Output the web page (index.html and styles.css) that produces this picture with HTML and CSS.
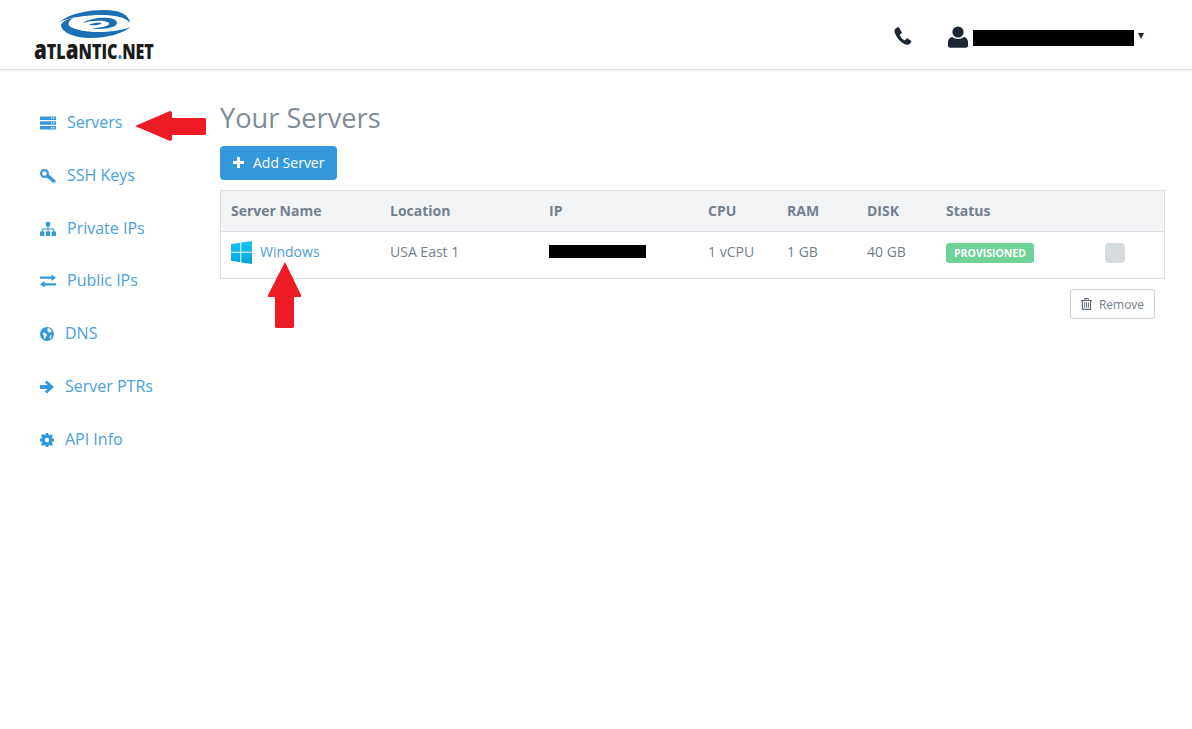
FILE: index.html
```html
<!DOCTYPE html>
<html lang="en">
<head>
<meta charset="utf-8">
<title>Your Servers</title>
<link rel="stylesheet" href="styles.css">
</head>
<body>
<header class="topbar">
  <a class="logo">
    <svg class="logo-mark" viewBox="0 0 72 28" width="72" height="28">
      <path fill="#1a6fb5" d="M0 12C12 3 30 0 45 0c15 0 25 4 26 13-4-6-16-8-29-8C28 5 12 7 0 12z"/>
      <path fill="#1a6fb5" d="M72 17c-10 7-24 11-40 11C15 28 2 22 2 15c1-3 6-6 12-7-6 4-6 8 0 10 14 6 41 5 58-1z"/>
      <path fill="#1a6fb5" d="M24 13c4-4 18-6 26-5 8 1 10 5 6 8-6 3-18 4-23 2 7 0 19-2 17-5-3-3-18-3-26 0z"/>
      <path fill="#1a6fb5" d="M30 14.500c4-1.500 9-2 13-1.500-3 2.500-9 3-13 1.500z"/>
    </svg>
    <span class="logo-text"><span class="logo-a">a</span>TL<span class="logo-a">a</span>NTIC<span class="logo-dot">.</span>NET</span>
  </a>
  <div class="top-actions">
    <svg class="phone" viewBox="0 0 20 20" width="20" height="20">
      <path fill="#1c2733" d="M4.700 1.200 2.400 2.700C1.200 3.600 1.300 5.500 2.100 7.500c1.800 4.600 5.800 9 9.900 10.800 2 .9 3.800.6 4.900-.5l1.300-1.700c.3-.5.200-1-.2-1.300l-3.300-2.300c-.5-.3-1-.2-1.300.2l-1 1.300c-.3.400-.7.400-1.100.2C9.800 13.700 7.900 11.400 7 9.400c-.2-.4-.1-.8.300-1.100l1.100-.8c.4-.3.500-.8.300-1.300L6 1.500c-.3-.5-.8-.6-1.300-.3z"/>
    </svg>
    <div class="account">
      <svg class="user" viewBox="0 0 20 22" width="20" height="22">
        <circle cx="10" cy="6" r="5.600" fill="#1c2733"/>
        <path fill="#1c2733" d="M0 19.500v-3.700C0 13.300 1.800 11.500 4.200 11c1.500 1.300 3.600 2 5.800 2s4.300-.7 5.800-2c2.400.5 4.200 2.300 4.200 4.800v3.700c0 1.300-1 2.300-2.300 2.300H2.300C1 21.800 0 20.800 0 19.500z"/>
      </svg>
      <span class="redact-name"></span>
      <span class="caret"></span>
    </div>
  </div>
</header>

<div class="layout">
  <nav class="sidebar">
    <a class="nav-item">
      <svg class="nav-icon wide" viewBox="0 0 16 13"><path fill="#3498db" fill-rule="evenodd" d="M0 0h16v3.400H0zM11 1v1.300h1.200V1zm2.200 0v1.300h1.200V1zM0 4.800h16v3.400H0zm11 1v1.300h1.200V5.800zm2.200 0v1.300h1.200V5.800zM0 9.600h16V13H0zm11 1v1.300h1.200v-1.300zm2.200 0v1.300h1.200v-1.300z"/></svg>
      <span>Servers</span>
    </a>
    <a class="nav-item">
      <svg class="nav-icon wide" viewBox="0 0 16 14"><path fill="#3498db" fill-rule="evenodd" d="M4.500 0C2 0 0 2 0 4.500S2 9 4.500 9c.8 0 1.500-.2 2.100-.5l1.600 1.500h1.300l.2 1.500h1.500l.2 1.500 1.600.6h2.500v-2.200L8.800 5.400c.1-.3.200-.6.200-.9C9 2 7 0 4.500 0zM4.500 2.200a2.300 2.300 0 1 1 0 4.600 2.300 2.300 0 0 1 0-4.600z"/></svg>
      <span>SSH Keys</span>
    </a>
    <a class="nav-item">
      <svg class="nav-icon wide" viewBox="0 0 16 14"><path fill="#3498db" d="M5.800 0h4.400v4.300H8.600v2.200h5.700V9.500H16V14h-4.300V9.500h1.500V7.600H8.600v1.900h1.500V14H5.900V9.500h1.600V7.600H2.800v1.900h1.500V14H0V9.500h1.700V6.500h5.700V4.300H5.800z"/></svg>
      <span>Private IPs</span>
    </a>
    <a class="nav-item">
      <svg class="nav-icon wide" viewBox="0 0 16 13"><path fill="#3498db" d="M11.500 0 16 3.200l-4.500 3.200V4.300H0V2.100h11.500zM4.500 6.600v2.100H16v2.200H4.500V13L0 9.800z"/></svg>
      <span>Public IPs</span>
    </a>
    <a class="nav-item tight">
      <svg class="nav-icon" viewBox="0 0 14 14"><circle cx="7" cy="7" r="7" fill="#3498db"/><path fill="#fff" d="M7.500 1.200 9.500 1.500l2 2-.5 2-1.500-.5-1.200.5-.8-1.500zM2.500 6l2-.5 2.500 2-.5 1.500-1 1-.3 2-1.200-.8-.5-3zM10 8.500l1.800-.3-.8 2.500-1.500 1z"/></svg>
      <span>DNS</span>
    </a>
    <a class="nav-item tight">
      <svg class="nav-icon" viewBox="0 0 14 14"><path fill="#3498db" d="M6.900.6 14 7l-7.100 6.400-2-2 2.700-2.400H0V5h7.600L4.900 2.600z"/></svg>
      <span>Server PTRs</span>
    </a>
    <a class="nav-item tight">
      <svg class="nav-icon" viewBox="0 0 14 14"><path fill="#3498db" fill-rule="evenodd" d="M5.800 0h2.400l.4 1.900 1 .4 1.600-1 1.700 1.700-1 1.600.4 1 1.700.4v2.400l-1.700.4-.4 1 1 1.600-1.700 1.700-1.600-1-1 .4-.4 1.500H5.800l-.4-1.500-1-.4-1.600 1-1.700-1.700 1-1.600-.4-1L0 8.200V5.800l1.700-.4.4-1-1-1.600 1.700-1.700 1.600 1 1-.4zM7 4.800a2.200 2.200 0 1 0 0 4.400 2.200 2.200 0 0 0 0-4.400z"/></svg>
      <span>API Info</span>
    </a>
  </nav>

  <main class="content">
    <h1 class="title">Your Servers</h1>
    <button class="add-btn"><span class="plus"></span>Add Server</button>
    <div class="table">
      <div class="row head">
        <div class="cell">Server Name</div>
        <div class="cell">Location</div>
        <div class="cell">IP</div>
        <div class="cell">CPU</div>
        <div class="cell">RAM</div>
        <div class="cell">DISK</div>
        <div class="cell">Status</div>
        <div class="cell"></div>
      </div>
      <div class="row body">
        <div class="cell name">
          <svg class="win" viewBox="0 0 21 23" width="21" height="23">
            <defs><linearGradient id="wing" x1="0" y1="0" x2="0" y2="1"><stop offset="0" stop-color="#18c3f5"/><stop offset="1" stop-color="#00a3dc"/></linearGradient></defs>
            <path fill="url(#wing)" d="M0 3.300 9.300 1.700v9.100H0zM10.300 1.500 21 0v10.800H10.300zM0 11.800h9.300v9.500L0 19.700zM10.300 11.800H21V23l-10.700-1.600z"/>
          </svg>
          <a class="link">Windows</a>
        </div>
        <div class="cell">USA East 1</div>
        <div class="cell"><span class="redact-ip"></span></div>
        <div class="cell">1 vCPU</div>
        <div class="cell">1 GB</div>
        <div class="cell">40 GB</div>
        <div class="cell"><span class="badge">PROVISIONED</span></div>
        <div class="cell"><span class="check"></span></div>
      </div>
    </div>
    <div class="table-actions">
      <button class="remove-btn">
        <svg viewBox="0 0 12 13" width="11" height="12"><path fill="#5f6b76" fill-rule="evenodd" d="M4 0h4l1 2h3v1.200h-1V13H1V3.200H0V2h3zM4.300 1.200 4 2h4l-.3-.8zM2.200 3.200v8.600h7.600V3.200zM3.500 4.500h1v6h-1zm2 0h1v6h-1zm2 0h1v6h-1z"/></svg>
        Remove
      </button>
    </div>
  </main>
</div>

<svg class="arrow arrow-left" viewBox="0 0 72 30" width="72" height="30"><path fill="#ed1c24" d="M0 15 35 0l2 1v6h33l1 1v15l-1 1H37v5l-2 1z"/></svg>
<svg class="arrow arrow-up" viewBox="0 0 34 66" width="34" height="66"><path fill="#ed1c24" d="M17 0 33 33v2H26v30l-1 1H8l-1-1V35H0v-2z"/></svg>
</body>
</html>
```

FILE: styles.css
```css
* { box-sizing: border-box; }
html, body { margin: 0; padding: 0; }
body {
  width: 1192px;
  height: 729px;
  overflow: hidden;
  position: relative;
  background: #fff;
  font-family: "Open Sans", sans-serif;
  font-size: 14px;
  color: #74808c;
}
.topbar {
  height: 70px;
  display: flex;
  justify-content: space-between;
  border-bottom: 1px solid #dcdcdc;
  box-shadow: 0 1px 2px rgba(0,0,0,.07);
  padding: 10px 48px 0 34px;
}
.logo {
  display: flex;
  flex-direction: column;
  width: 121px;
  align-items: flex-start;
}
.logo-mark { margin: 0 0 0 25px; display: block; }
.logo-text {
  font-family: "Open Sans", sans-serif;
  font-weight: 800;
  font-size: 21px;
  line-height: 20px;
  margin-top: 3px;
  color: #1b1b1b;
  white-space: nowrap;
  transform: scaleX(.765);
  transform-origin: left center;
}
.logo-a { font-size: 27px; line-height: 0; }
.logo-dot { color: #1a8ad2; }
.top-actions {
  display: flex;
  align-items: flex-start;
  padding-top: 16px;
}
.phone { margin-right: 35px; }
.account { display: flex; align-items: center; }
.user { margin-right: 5px; }
.redact-name {
  display: block;
  width: 161px;
  height: 16px;
  background: #000;
  margin-right: 4px;
  position: relative;
  top: 1px;
}
.caret {
  display: block;
  border-style: solid;
  border-width: 6px 3.500px 0;
  border-color: #1c2733 transparent transparent;
  position: relative;
  top: -1px;
}

.layout { display: flex; }
.sidebar {
  width: 220px;
  padding: 41.500px 0 0 40px;
  display: flex;
  flex-direction: column;
  gap: 31.800px;
}
.nav-item {
  display: flex;
  align-items: center;
  height: 21px;
  font-size: 16px;
  color: #4a9fdc;
  white-space: nowrap;
}
.nav-icon { width: 14px; height: 14px; margin-right: 11px; flex: none; position: relative; top: 1px; }
.nav-icon.wide { width: 16px; margin-right: 11px; }
.content { width: 945px; padding-top: 30px; }
.title {
  font-size: 27.200px;
  font-weight: 400;
  line-height: 36px;
  margin: 0 0 10px;
  color: #7f8c98;
}
.add-btn {
  display: flex;
  align-items: center;
  width: 117px;
  height: 34px;
  padding: 0 0 2px 13px;
  border: 0;
  border-radius: 4px;
  background: #3498db;
  color: #fff;
  font: 14px "Open Sans", sans-serif;
}
.plus {
  width: 11px;
  height: 11px;
  margin-right: 9px;
  background:
    linear-gradient(#fff,#fff) center/11px 3px no-repeat,
    linear-gradient(#fff,#fff) center/3px 11px no-repeat;
}
.table {
  margin-top: 10px;
  border: 1px solid #dee0e3;
}
.row {
  display: grid;
  grid-template-columns: 159px 159px 159px 79px 80px 79px 159px 1fr;
  align-items: center;
  padding-left: 10px;
}
.row.head {
  height: 41px;
  padding-bottom: 2px;
  background: #f3f4f6;
  border-bottom: 1px solid #dee0e3;
  font-weight: 700;
  color: #74808f;
}
.row.body { height: 46px; padding-bottom: 8px; }
.cell { white-space: nowrap; display: flex; align-items: center; }
.name { gap: 8px; }
.win { flex: none; margin-top: 2px; }
.link { color: #4a9fdc; }
.redact-ip { display: block; width: 97px; height: 13px; background: #000; margin-top: 1px; }
.badge {
  display: block;
  width: 88px;
  height: 20px;
  margin-top: 4px;
  border-radius: 3px;
  background: #6fd296;
  color: #fff;
  font-size: 10.500px;
  font-weight: 700;
  line-height: 20px;
  text-align: center;
}
.check { display: block; width: 20px; height: 20px; margin-top: 4px; border-radius: 4px; background: #d6dbdf; }
.table-actions {
  display: flex;
  justify-content: flex-end;
  padding: 10px 10px 0 0;
}
.remove-btn {
  display: flex;
  align-items: center;
  justify-content: center;
  gap: 7px;
  width: 85px;
  height: 30px;
  border: 1px solid #ccd0d4;
  border-radius: 3px;
  background: #fff;
  color: #74808c;
  font: 12px "Open Sans", sans-serif;
  padding: 0;
}
.arrow { position: absolute; }
.arrow-left { left: 135px; top: 111px; }
.arrow-up { left: 268px; top: 262px; }
```
